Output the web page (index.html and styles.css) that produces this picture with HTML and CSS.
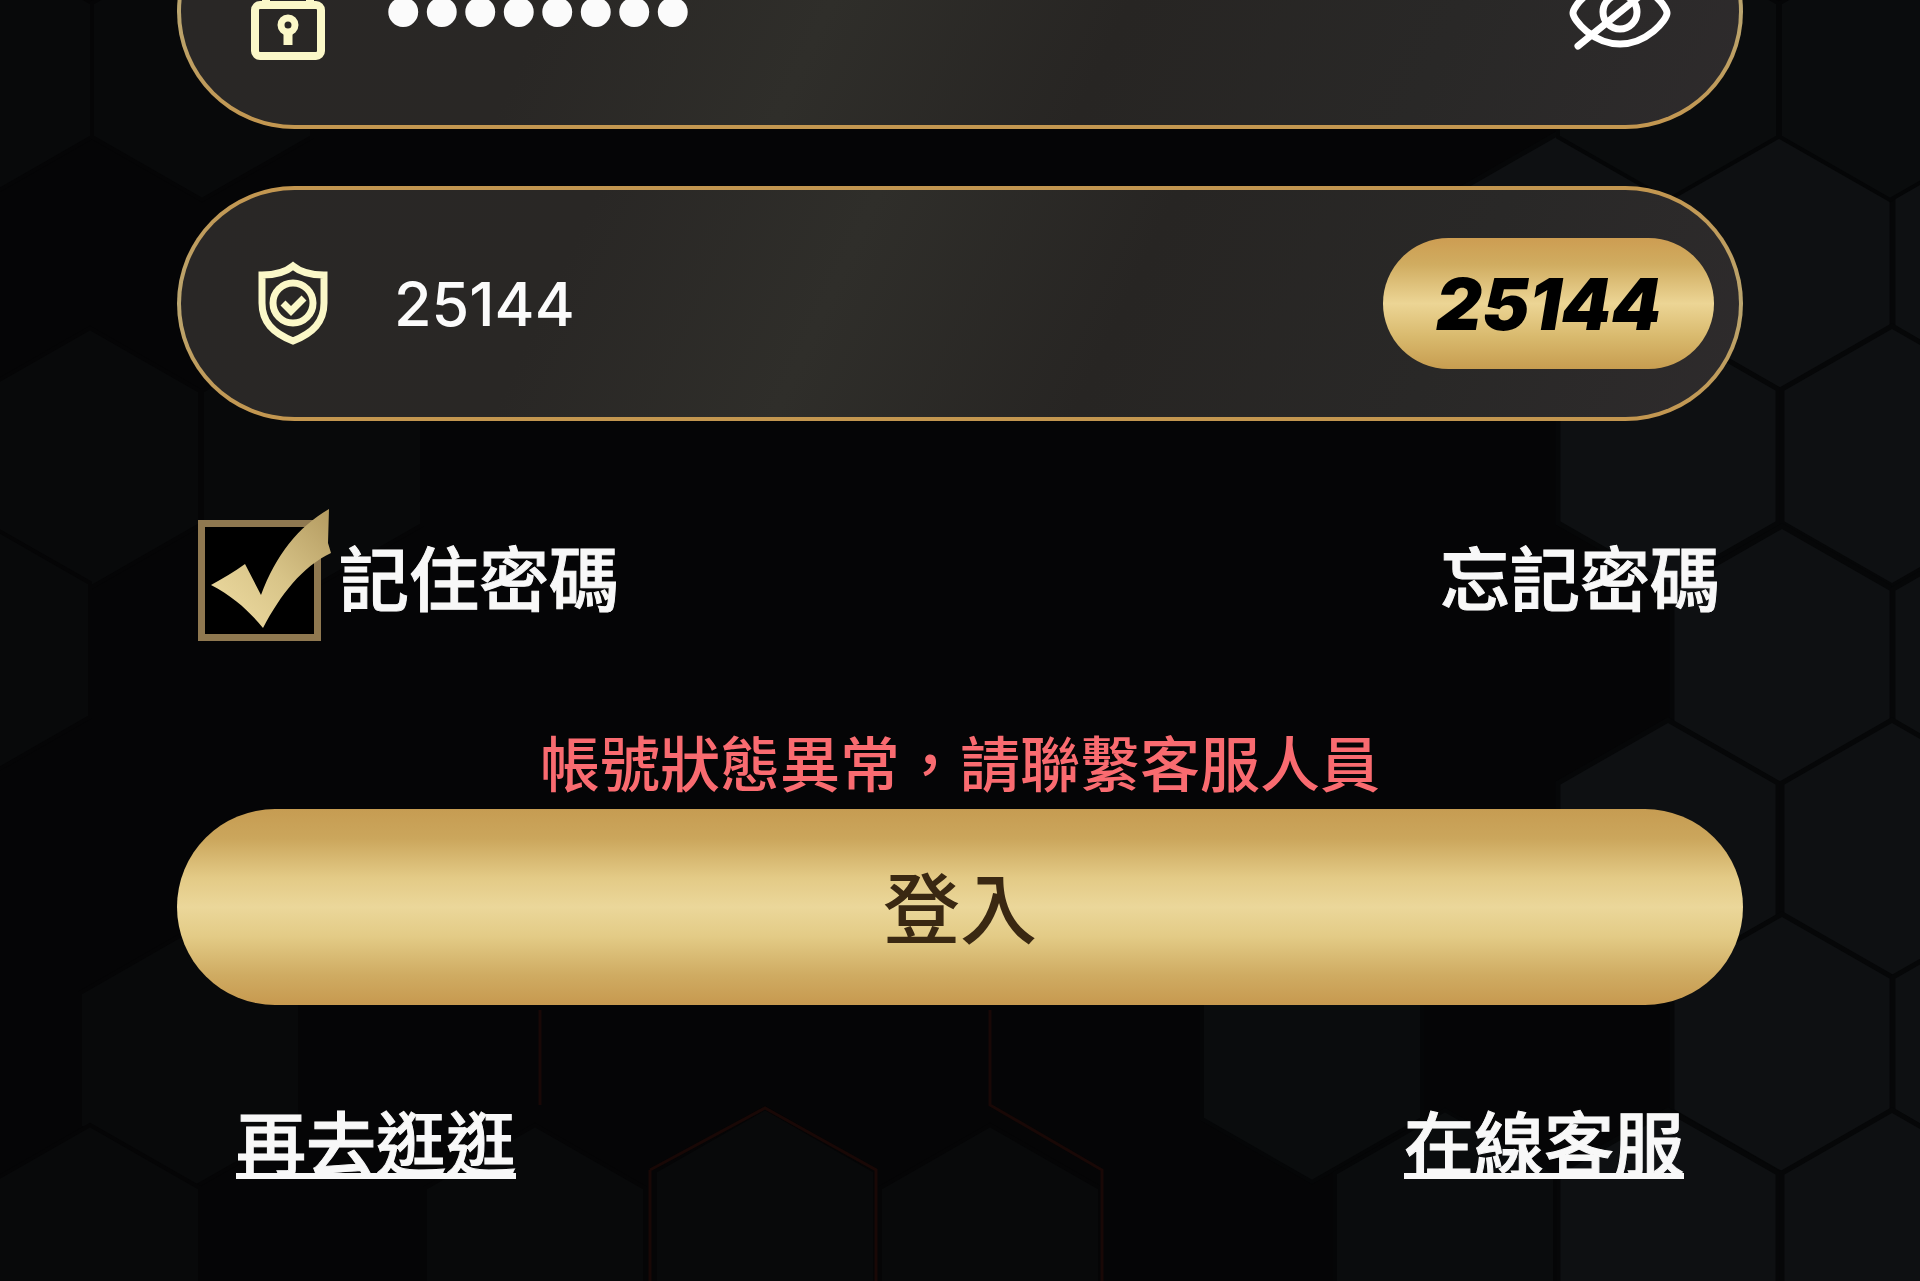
FILE: index.html
```html
<!DOCTYPE html>
<html lang="zh-Hant">
<head>
    <meta charset="UTF-8">
    <meta name="viewport" content="width=device-width, initial-scale=1.0">
    <title>登入</title>
    <link rel="stylesheet" href="styles.css">
</head>
<body>
<svg class="backdrop" viewBox="0 0 1920 1281" preserveAspectRatio="xMidYMid slice" aria-hidden="true">
    <defs>
        <path id="hex" d="M0-130 110-67V67L0 130-110 67V-67Z"/>
    </defs>
    <!-- left side -->
    <g class="hex-dim">
        <use href="#hex" x="-18" y="70"/>
        <use href="#hex" x="202" y="70"/>
        <use href="#hex" x="90" y="458"/>
        <use href="#hex" x="312" y="458"/>
        <use href="#hex" x="-20" y="650"/>
        <use href="#hex" x="190" y="1060"/>
        <use href="#hex" x="90" y="1255"/>
        <use href="#hex" x="535" y="1255"/>
        <use href="#hex" x="765" y="1238"/>
        <use href="#hex" x="990" y="1255"/>
    </g>
    <!-- right side -->
    <g class="hex-lit">
        <use href="#hex" x="1560" y="262"/>
        <use href="#hex" x="1782" y="262"/>
        <use href="#hex" x="2003" y="262"/>
        <use href="#hex" x="1668" y="456"/>
        <use href="#hex" x="1892" y="456"/>
        <use href="#hex" x="1782" y="656"/>
        <use href="#hex" x="2003" y="656"/>
        <use href="#hex" x="1668" y="850"/>
        <use href="#hex" x="1892" y="850"/>
        <use href="#hex" x="1782" y="1044"/>
        <use href="#hex" x="2003" y="1044"/>
        <use href="#hex" x="1668" y="1240"/>
        <use href="#hex" x="1892" y="1240"/>
    </g>
    <g class="hex-mid">
        <use href="#hex" x="1668" y="70"/>
        <use href="#hex" x="1890" y="70"/>
        <use href="#hex" x="1312" y="1052"/>
        <use href="#hex" x="1445" y="1240"/>
    </g>
    <path class="ember" d="M540 1010V1105M650 1170V1281M650 1170 765 1108 876 1170V1281M990 1010V1105L1102 1170V1281"/>
</svg>

<main class="login">
    <form>
        <div class="field">
            <svg class="field-icon" viewBox="0 0 84 100" aria-hidden="true">
                <path class="line" d="M20 42V26a22 22 0 0 1 44 0v16"/>
                <rect class="line" x="9" y="43" width="66" height="51" rx="5"/>
                <circle cx="42" cy="63" r="7" fill="none" stroke="#fbf8c8" stroke-width="7"/>
                <path d="M42 68v15" stroke="#fbf8c8" stroke-width="9"/>
            </svg>
            <input class="secret" type="password" value="abcd1234" aria-label="密碼">
            <button class="eye" type="button" aria-label="顯示密碼">
                <svg viewBox="0 0 108 80" width="108" height="80" aria-hidden="true">
                    <path d="M8 41C8 34 28 10 55 10s47 24 47 31-20 31-47 31S8 48 8 41Z"/>
                    <circle cx="55" cy="40" r="17"/>
                    <path d="M13 74 97 6"/>
                </svg>
            </button>
        </div>

        <div class="field">
            <svg class="field-icon" viewBox="0 0 84 100" aria-hidden="true">
                <path d="M47 12C40 18 31 21 16 21v28c0 19 11 30 31 38 20-8 31-19 31-38V21C63 21 54 18 47 12Z" fill="none" stroke="#fbf8c8" stroke-width="7"/>
                <circle cx="47" cy="49" r="20" fill="none" stroke="#fbf8c8" stroke-width="7"/>
                <path d="M37 49l8 8 13-13" fill="none" stroke="#fbf8c8" stroke-width="7"/>
            </svg>
            <input class="code" type="text" value="25144" aria-label="驗證碼">
            <button class="captcha" type="button">25144</button>
        </div>

        <div class="options">
            <label class="remember">
                <span class="tick">
                    <input type="checkbox" checked>
                    <svg viewBox="0 0 134 134" aria-hidden="true">
                        <defs>
                            <linearGradient id="gold" x1="0" y1="1" x2="1" y2="0">
                                <stop offset="0" stop-color="#f0dea4"/>
                                <stop offset=".5" stop-color="#d8c488"/>
                                <stop offset="1" stop-color="#b39a60"/>
                            </linearGradient>
                        </defs>
                        <path fill="url(#gold)" d="M13 78C25 71 36 65 47 57L63 88C78 48 100 20 131 2L130 36 133 46C104 60 83 87 65 121 51 104 36 90 13 78Z"/>
                    </svg>
                </span>
                記住密碼
            </label>
            <a href="#">忘記密碼</a>
        </div>

        <p class="error" role="alert">帳號狀態異常，請聯繫客服人員</p>
        <button class="submit" type="submit">登入</button>
    </form>

    <nav class="links">
        <a href="#">再去逛逛</a>
        <a href="#">在線客服</a>
    </nav>
</main>
</body>
</html>
```
FILE: styles.css
```css
* {
    box-sizing: border-box;
}
body {
    margin: 0;
    min-height: 100vh;
    overflow: hidden;
    background-color: #050506;
    color: #f8f8f8;
    font-family: Inter, 'Noto Sans CJK TC', sans-serif;
    font-size: 70px;
    font-weight: 500;
    line-height: 84px;
}
a {
    color: inherit;
    text-decoration: none;
}
button,
input {
    border: none;
    padding: 0;
    font-family: inherit;
}
button {
    cursor: pointer;
}

/* honeycomb behind the form */
.backdrop {
    position: fixed;
    inset: 0;
    z-index: -1;
    width: 100%;
    height: 100%;
}
.hex-dim {
    fill: #08090a;
    stroke: #050506;
    stroke-width: 4;
}
.hex-mid {
    fill: #0a0c0d;
    stroke: #050607;
    stroke-width: 4;
}
.hex-lit {
    fill: #0e1012;
    stroke: #060708;
    stroke-width: 5;
}
.ember {
    fill: none;
    stroke: #190806;
    stroke-width: 3;
}

/* the page is scrolled so that the first field is cut by the top edge */
.login {
    margin-top: -106px;
    padding: 0 177px;
}
.field {
    display: flex;
    align-items: center;
    height: 235px;
    margin-bottom: 57px;
    padding: 0 25px 0 65px;
    border: 4px solid transparent;
    border-radius: 118px;
    background:
        linear-gradient(115deg, #292726 0%, #292725 25%, #2f2e2a 42%, #272523 60%, #292827 80%, #2e2b2c 100%) padding-box,
        linear-gradient(#c3964f, #bba670 50%, #c3964f) border-box;
}
.field-icon {
    flex: none;
    width: 84px;
    height: 100px;
}
.line {
    fill: none;
    stroke: #fbf8c8;
    stroke-width: 8;
}
.field input {
    flex: 1;
    min-width: 0;
    height: 130px;
    background: none;
    color: #fbfbfb;
    outline: none;
}
.field .secret {
    margin-left: 54px;
    padding-bottom: 4px;
    font-family: 'Liberation Sans', sans-serif;
    font-size: 110px;
}
.field .code {
    margin-left: 64px;
    font-size: 61px;
    font-weight: 500;
}
.eye {
    display: flex;
    margin-right: 41px;
    background: none;
}
.eye svg {
    fill: none;
    stroke: #fff;
    stroke-width: 7;
    stroke-linecap: round;
}
.captcha {
    width: 331px;
    height: 131px;
    border-radius: 66px;
    background: linear-gradient(#cd9d52, #d0ac60 20%, #ecd595 50%, #d9ba6e 75%, #c79d50);
    color: #000;
    font-size: 71px;
    font-style: italic;
    font-weight: 900;
}

.options {
    display: flex;
    justify-content: space-between;
    align-items: center;
    margin-top: 99px;
    padding: 0 23px 0 21px;
}
.remember {
    display: flex;
    align-items: center;
    gap: 18px;
}
.tick {
    position: relative;
    display: flex;
}
.tick input {
    appearance: none;
    width: 123px;
    height: 121px;
    margin: 0;
    border: 7px solid #8f7850;
    background-color: #000;
}
.tick svg {
    position: absolute;
    left: 0;
    bottom: 0;
    width: 134px;
    height: 134px;
    visibility: hidden;
}
.tick input:checked + svg {
    visibility: visible;
}
.options,
.links {
    -webkit-text-stroke: 1px currentColor;
}

.error {
    margin: 88px 0 8px;
    color: #f96b70;
    font-size: 60px;
    line-height: 72px;
    text-align: center;
}
.submit {
    display: block;
    width: 100%;
    height: 196px;
    padding-bottom: 6px;
    border-radius: 98px;
    background: linear-gradient(#c69c52, #cba65c 15%, #e3ca86 35%, #ebd79a 50%, #e3cb86 65%, #cfab62 85%, #c7994f);
    color: #3a2812;
    font-size: 77px;
    font-weight: 500;
}

.links {
    display: flex;
    justify-content: space-between;
    margin-top: 99px;
    padding: 0 59px;
}
.links a {
    text-decoration: underline;
    text-decoration-thickness: 6px;
    text-underline-offset: 2px;
    text-decoration-skip-ink: none;
}
```
